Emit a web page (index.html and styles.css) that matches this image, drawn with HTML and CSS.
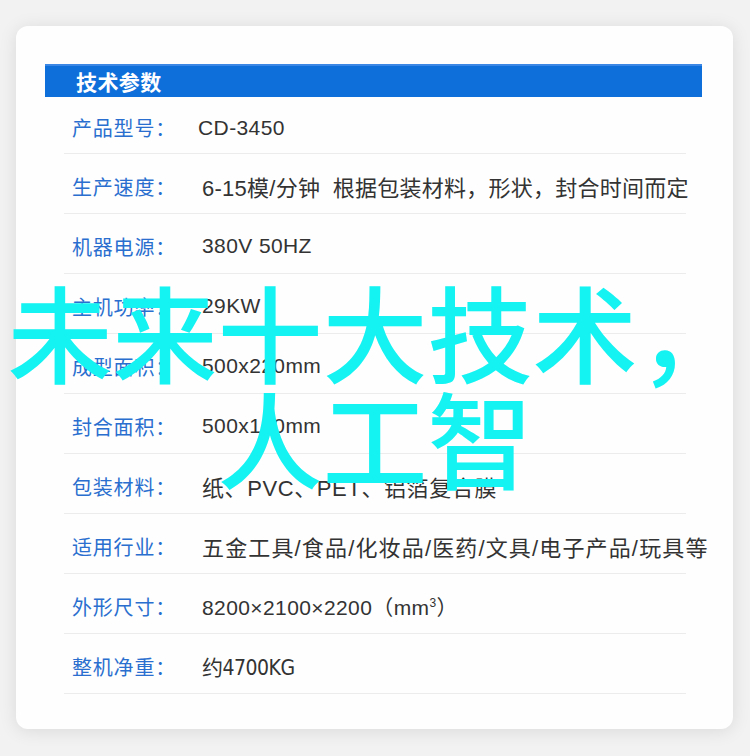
FILE: index.html
```html
<!DOCTYPE html>
<html lang="zh-CN">
<head>
    <meta charset="UTF-8">
    <meta name="viewport" content="width=device-width, initial-scale=1.0">
    <title>技术参数</title>
    <link rel="stylesheet" href="styles.css">
</head>
<body>

<div class="spec-card">
    <div class="spec-title">技术参数</div>

    <div class="spec-list">
        <div class="spec-row">
            <span class="spec-label">产品型号：</span>
            <span class="spec-value first">CD-3450</span>
        </div>
        <div class="spec-row">
            <span class="spec-label">生产速度：</span>
            <span class="spec-value cjk tight">6-15模/分钟&nbsp; 根据包装材料，形状，封合时间而定</span>
        </div>
        <div class="spec-row">
            <span class="spec-label">机器电源：</span>
            <span class="spec-value">380V 50HZ</span>
        </div>
        <div class="spec-row">
            <span class="spec-label">主机功率：</span>
            <span class="spec-value">29KW</span>
        </div>
        <div class="spec-row">
            <span class="spec-label">成型面积：</span>
            <span class="spec-value">500x220mm</span>
        </div>
        <div class="spec-row">
            <span class="spec-label">封合面积：</span>
            <span class="spec-value">500x120mm</span>
        </div>
        <div class="spec-row">
            <span class="spec-label">包装材料：</span>
            <span class="spec-value cjk">纸、PVC、PET、铝箔复合膜</span>
        </div>
        <div class="spec-row">
            <span class="spec-label">适用行业：</span>
            <span class="spec-value cjk wide">五金工具/食品/化妆品/医药/文具/电子产品/玩具等</span>
        </div>
        <div class="spec-row">
            <span class="spec-label">外形尺寸：</span>
            <span class="spec-value">8200×2100×2200（mm<sup>3</sup>）</span>
        </div>
        <div class="spec-row">
            <span class="spec-label">整机净重：</span>
            <span class="spec-value narrow">约4700KG</span>
        </div>
    </div>
</div>

<div class="headline">未来十大技术，<br>人工智</div>

</body>
</html>
```

FILE: styles.css
```css
body {
    margin: 0;
    padding: 26px 17px 17px 16px;
    background-color: #f2f2f2;
    font-family: "Noto Sans CJK SC", sans-serif;
    color: #333;
}
.spec-card {
    width: 717px;
    box-sizing: border-box;
    padding: 38px 31px 35px 29px;
    background: #fefefe;
    border-radius: 12px;
    box-shadow: 0 2px 18px rgba(0, 0, 0, 0.1);
}
.spec-title {
    height: 33px;
    box-sizing: border-box;
    padding-left: 31px;
    background-color: #0f6fda;
    border-top: 2px solid #3b87e6;
    color: #fff;
    font-size: 21px;
    font-weight: bold;
    letter-spacing: 0.4px;
    line-height: 30px;
}
.spec-list {
    margin: 0 16px 0 19px;
}
.spec-row {
    display: flex;
    align-items: center;
    height: 60px;
    box-sizing: border-box;
    padding: 5px 0 0 8px;
    border-bottom: 1px solid #ececec;
}
.spec-row:first-child {
    height: 57px;
}
.spec-label {
    width: 130px;
    flex-shrink: 0;
    color: #2a6fcf;
    font-size: 20px;
    letter-spacing: 0.8px;
}
.spec-value {
    font-family: "Liberation Sans", "Noto Sans CJK SC", sans-serif;
    font-size: 21px;
    letter-spacing: 0.4px;
    white-space: nowrap;
}
.spec-value.cjk {
    font-size: 22px;
    letter-spacing: 0.6px;
}
.spec-value.tight {
    letter-spacing: 0.25px;
}
.spec-value.wide {
    letter-spacing: 1.15px;
}
.spec-value.first {
    margin-left: -4px;
}
.spec-value.narrow {
    font-family: "DejaVu Sans Condensed", "Noto Sans CJK SC", sans-serif;
    letter-spacing: -0.5px;
}
.spec-value sup {
    font-size: 12px;
}
.headline {
    position: absolute;
    top: 276px;
    left: 0;
    width: 750px;
    text-align: center;
    color: #14f2f2;
    font-family: "Noto Sans CJK SC", sans-serif;
    font-size: 105px;
    font-weight: 500;
    line-height: 106px;
}
```
